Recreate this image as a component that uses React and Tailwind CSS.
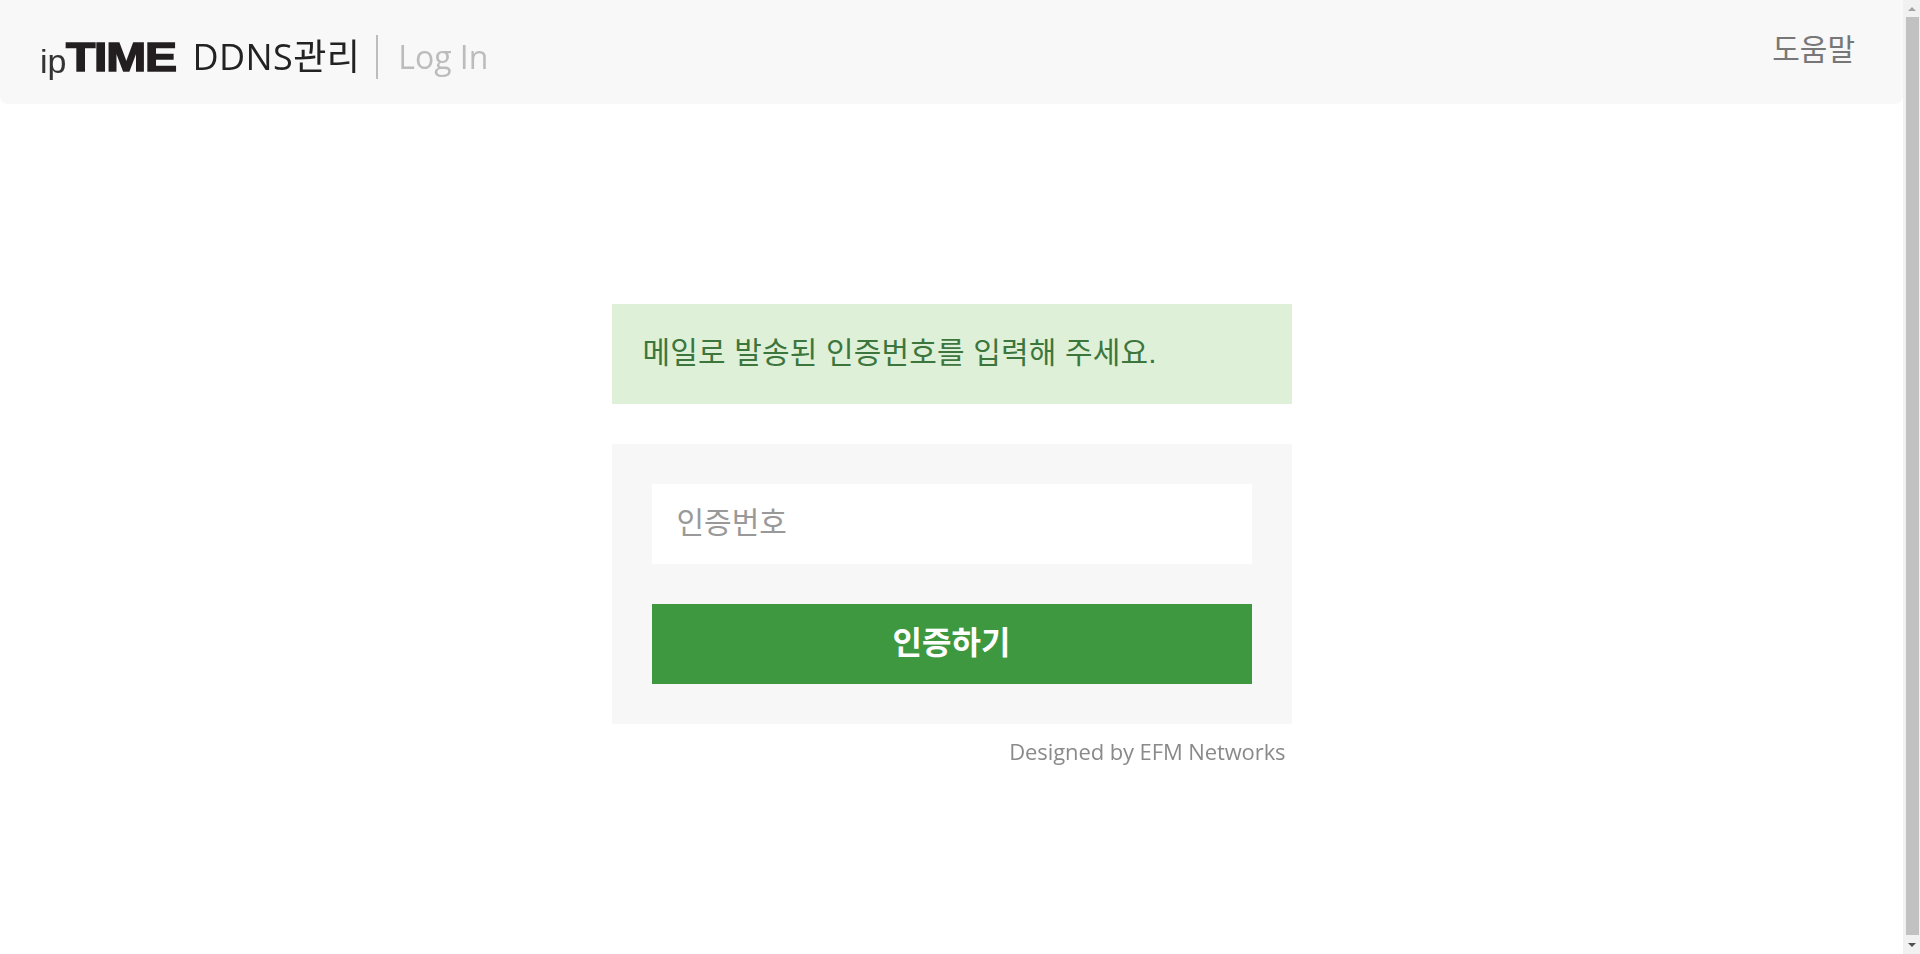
const sans = "font-['Liberation_Sans','Noto_Sans_CJK_KR',sans-serif]";
const soft = "font-['Open_Sans','Noto_Sans_CJK_KR',sans-serif]";

function Logo() {
  return (
    <div className={`flex items-center blur-[0.4px] ${soft}`}>
      <span className={`text-[34px] leading-none text-[#333] mt-[7px] ${sans}`}>ip</span>
      <span className={`inline-block w-[128px] origin-left scale-x-[1.2] text-[40px] leading-none font-bold text-[#231f20] [-webkit-text-stroke:1.5px_#231f20] tracking-[-1px] ${sans}`}>
        TIME
      </span>
      <span className="ml-[-2px] text-[36px] leading-none tracking-[0.4px] text-[#222]">DDNS관리</span>
      <div className="ml-[16px] h-[44px] w-[2px] bg-[#bdbdbd]" />
      <span className="ml-[20px] text-[32px] leading-none text-[#bcbcbc]">Log In</span>
    </div>
  );
}

function Scrollbar() {
  return (
    <div className="flex w-[17px] shrink-0 flex-col items-center bg-[#f1f1f1]">
      <div className="flex h-[17px] w-full items-center justify-center">
        <div className="h-0 w-0 border-x-[4px] border-b-[4px] border-x-transparent border-b-[#a3a3a3]" />
      </div>
      <div className="ml-[1px] w-[13px] flex-1 bg-[#c1c1c1]" />
      <div className="flex h-[19px] w-full items-center justify-center">
        <div className="h-0 w-0 border-x-[4px] border-t-[4px] border-x-transparent border-t-[#505050]" />
      </div>
    </div>
  );
}

export default function App() {
  return (
    <div className={`flex h-screen overflow-hidden bg-white ${sans}`}>
      <div className="min-w-0 flex-1">
        <header className="flex h-[104px] items-start justify-between rounded-b-[8px] bg-[#f8f8f8] pl-[40px] pr-[48px]">
          <div className="pt-[35px]">
            <Logo />
          </div>
          <a className="pt-[30px] text-[30px] leading-[40px] text-[#777]">도움말</a>
        </header>

        <main className="mx-auto mt-[200px] w-[680px]">
          <div className="flex h-[100px] items-center bg-[#dff0d8] pb-[4px] pl-[31px] text-[30px] tracking-[0.15px] text-[#3c763d]">
            메일로 발송된 인증번호를 입력해 주세요.
          </div>
          <form className="mt-[40px] flex flex-col gap-[40px] bg-[#f7f7f7] p-[40px]">
            <input
              placeholder="인증번호"
              className="h-[80px] w-full bg-white px-[25px] pb-[2px] text-[30px] text-[#555] outline-none placeholder:text-[#999]"
            />
            <button type="button" className="h-[80px] w-full bg-[#3e983f] pb-[2px] text-[32px] font-bold text-white">
              인증하기
            </button>
          </form>
          <p className={`mt-[12px] pr-[6px] text-right text-[22px] leading-[30px] tracking-[-0.1px] text-[#8a8a8a] blur-[0.4px] ${soft}`}>
            Designed by EFM Networks
          </p>
        </main>
      </div>
      <Scrollbar />
    </div>
  );
}
